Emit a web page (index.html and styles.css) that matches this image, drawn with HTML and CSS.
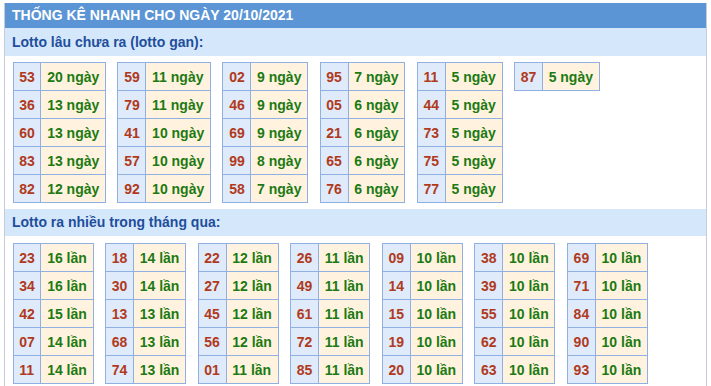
FILE: index.html
```html
<!DOCTYPE html>
<html lang="vi">
<head>
<meta charset="utf-8">
<title>Thống kê nhanh</title>
<link rel="stylesheet" href="styles.css">
</head>
<body>
<div class="box">
  <div class="title">THỐNG KÊ NHANH CHO NGÀY 20/10/2021</div>
  <div class="sub">Lotto lâu chưa ra (lotto gan):</div>
  <div class="tables">
    <table><tr><td class="n">53</td><td class="v">20 ngày</td></tr><tr><td class="n">36</td><td class="v">13 ngày</td></tr><tr><td class="n">60</td><td class="v">13 ngày</td></tr><tr><td class="n">83</td><td class="v">13 ngày</td></tr><tr><td class="n">82</td><td class="v">12 ngày</td></tr></table>
    <table><tr><td class="n">59</td><td class="v">11 ngày</td></tr><tr><td class="n">79</td><td class="v">11 ngày</td></tr><tr><td class="n">41</td><td class="v">10 ngày</td></tr><tr><td class="n">57</td><td class="v">10 ngày</td></tr><tr><td class="n">92</td><td class="v">10 ngày</td></tr></table>
    <table><tr><td class="n">02</td><td class="v">9 ngày</td></tr><tr><td class="n">46</td><td class="v">9 ngày</td></tr><tr><td class="n">69</td><td class="v">9 ngày</td></tr><tr><td class="n">99</td><td class="v">8 ngày</td></tr><tr><td class="n">58</td><td class="v">7 ngày</td></tr></table>
    <table><tr><td class="n">95</td><td class="v">7 ngày</td></tr><tr><td class="n">05</td><td class="v">6 ngày</td></tr><tr><td class="n">21</td><td class="v">6 ngày</td></tr><tr><td class="n">65</td><td class="v">6 ngày</td></tr><tr><td class="n">76</td><td class="v">6 ngày</td></tr></table>
    <table><tr><td class="n">11</td><td class="v">5 ngày</td></tr><tr><td class="n">44</td><td class="v">5 ngày</td></tr><tr><td class="n">73</td><td class="v">5 ngày</td></tr><tr><td class="n">75</td><td class="v">5 ngày</td></tr><tr><td class="n">77</td><td class="v">5 ngày</td></tr></table>
    <table><tr><td class="n">87</td><td class="v">5 ngày</td></tr></table>
  </div>
  <div class="sub">Lotto ra nhiều trong tháng qua:</div>
  <div class="tables">
    <table><tr><td class="n">23</td><td class="v">16 lần</td></tr><tr><td class="n">34</td><td class="v">16 lần</td></tr><tr><td class="n">42</td><td class="v">15 lần</td></tr><tr><td class="n">07</td><td class="v">14 lần</td></tr><tr><td class="n">11</td><td class="v">14 lần</td></tr></table>
    <table><tr><td class="n">18</td><td class="v">14 lần</td></tr><tr><td class="n">30</td><td class="v">14 lần</td></tr><tr><td class="n">13</td><td class="v">13 lần</td></tr><tr><td class="n">68</td><td class="v">13 lần</td></tr><tr><td class="n">74</td><td class="v">13 lần</td></tr></table>
    <table><tr><td class="n">22</td><td class="v">12 lần</td></tr><tr><td class="n">27</td><td class="v">12 lần</td></tr><tr><td class="n">45</td><td class="v">12 lần</td></tr><tr><td class="n">56</td><td class="v">12 lần</td></tr><tr><td class="n">01</td><td class="v">11 lần</td></tr></table>
    <table><tr><td class="n">26</td><td class="v">11 lần</td></tr><tr><td class="n">49</td><td class="v">11 lần</td></tr><tr><td class="n">61</td><td class="v">11 lần</td></tr><tr><td class="n">72</td><td class="v">11 lần</td></tr><tr><td class="n">85</td><td class="v">11 lần</td></tr></table>
    <table><tr><td class="n">09</td><td class="v">10 lần</td></tr><tr><td class="n">14</td><td class="v">10 lần</td></tr><tr><td class="n">15</td><td class="v">10 lần</td></tr><tr><td class="n">19</td><td class="v">10 lần</td></tr><tr><td class="n">20</td><td class="v">10 lần</td></tr></table>
    <table><tr><td class="n">38</td><td class="v">10 lần</td></tr><tr><td class="n">39</td><td class="v">10 lần</td></tr><tr><td class="n">55</td><td class="v">10 lần</td></tr><tr><td class="n">62</td><td class="v">10 lần</td></tr><tr><td class="n">63</td><td class="v">10 lần</td></tr></table>
    <table><tr><td class="n">69</td><td class="v">10 lần</td></tr><tr><td class="n">71</td><td class="v">10 lần</td></tr><tr><td class="n">84</td><td class="v">10 lần</td></tr><tr><td class="n">90</td><td class="v">10 lần</td></tr><tr><td class="n">93</td><td class="v">10 lần</td></tr></table>
  </div>
</div>
</body>
</html>
```

FILE: styles.css
```css
html, body {
  margin: 0;
  padding: 0;
  background: #fff;
}
body {
  font-family: "Liberation Sans", Arial, sans-serif;
  font-size: 14px;
  font-weight: bold;
}
.box {
  margin: 3px 0 0 4px;
  width: 701px;
  min-height: 383px;
  border-left: 1px solid #c8ccd4;
  border-right: 1px solid #c8ccd4;
}
.title {
  background: #5b95d5;
  color: #fff;
  height: 25px;
  line-height: 25px;
  padding-left: 7px;
}
.sub {
  background: #d5e8fb;
  color: #1f4e9c;
  height: 28px;
  line-height: 28px;
  padding-left: 7px;
}
.tables {
  display: flex;
  align-items: flex-start;
  gap: 11.5px;
  padding: 6px 0 6px 7.5px;
}
.tables + .sub {
  height: 27px;
  line-height: 27px;
  margin-bottom: 1px;
}
table {
  border-collapse: collapse;
}
td {
  border: 1px solid #8fb0e0;
  height: 27px;
  padding: 0 5.7px;
  white-space: nowrap;
  line-height: 16px;
}
td.n {
  background: #dfeafa;
  color: #b03a20;
}
td.v {
  background: #fff3e0;
  color: #1d7a12;
}
```
